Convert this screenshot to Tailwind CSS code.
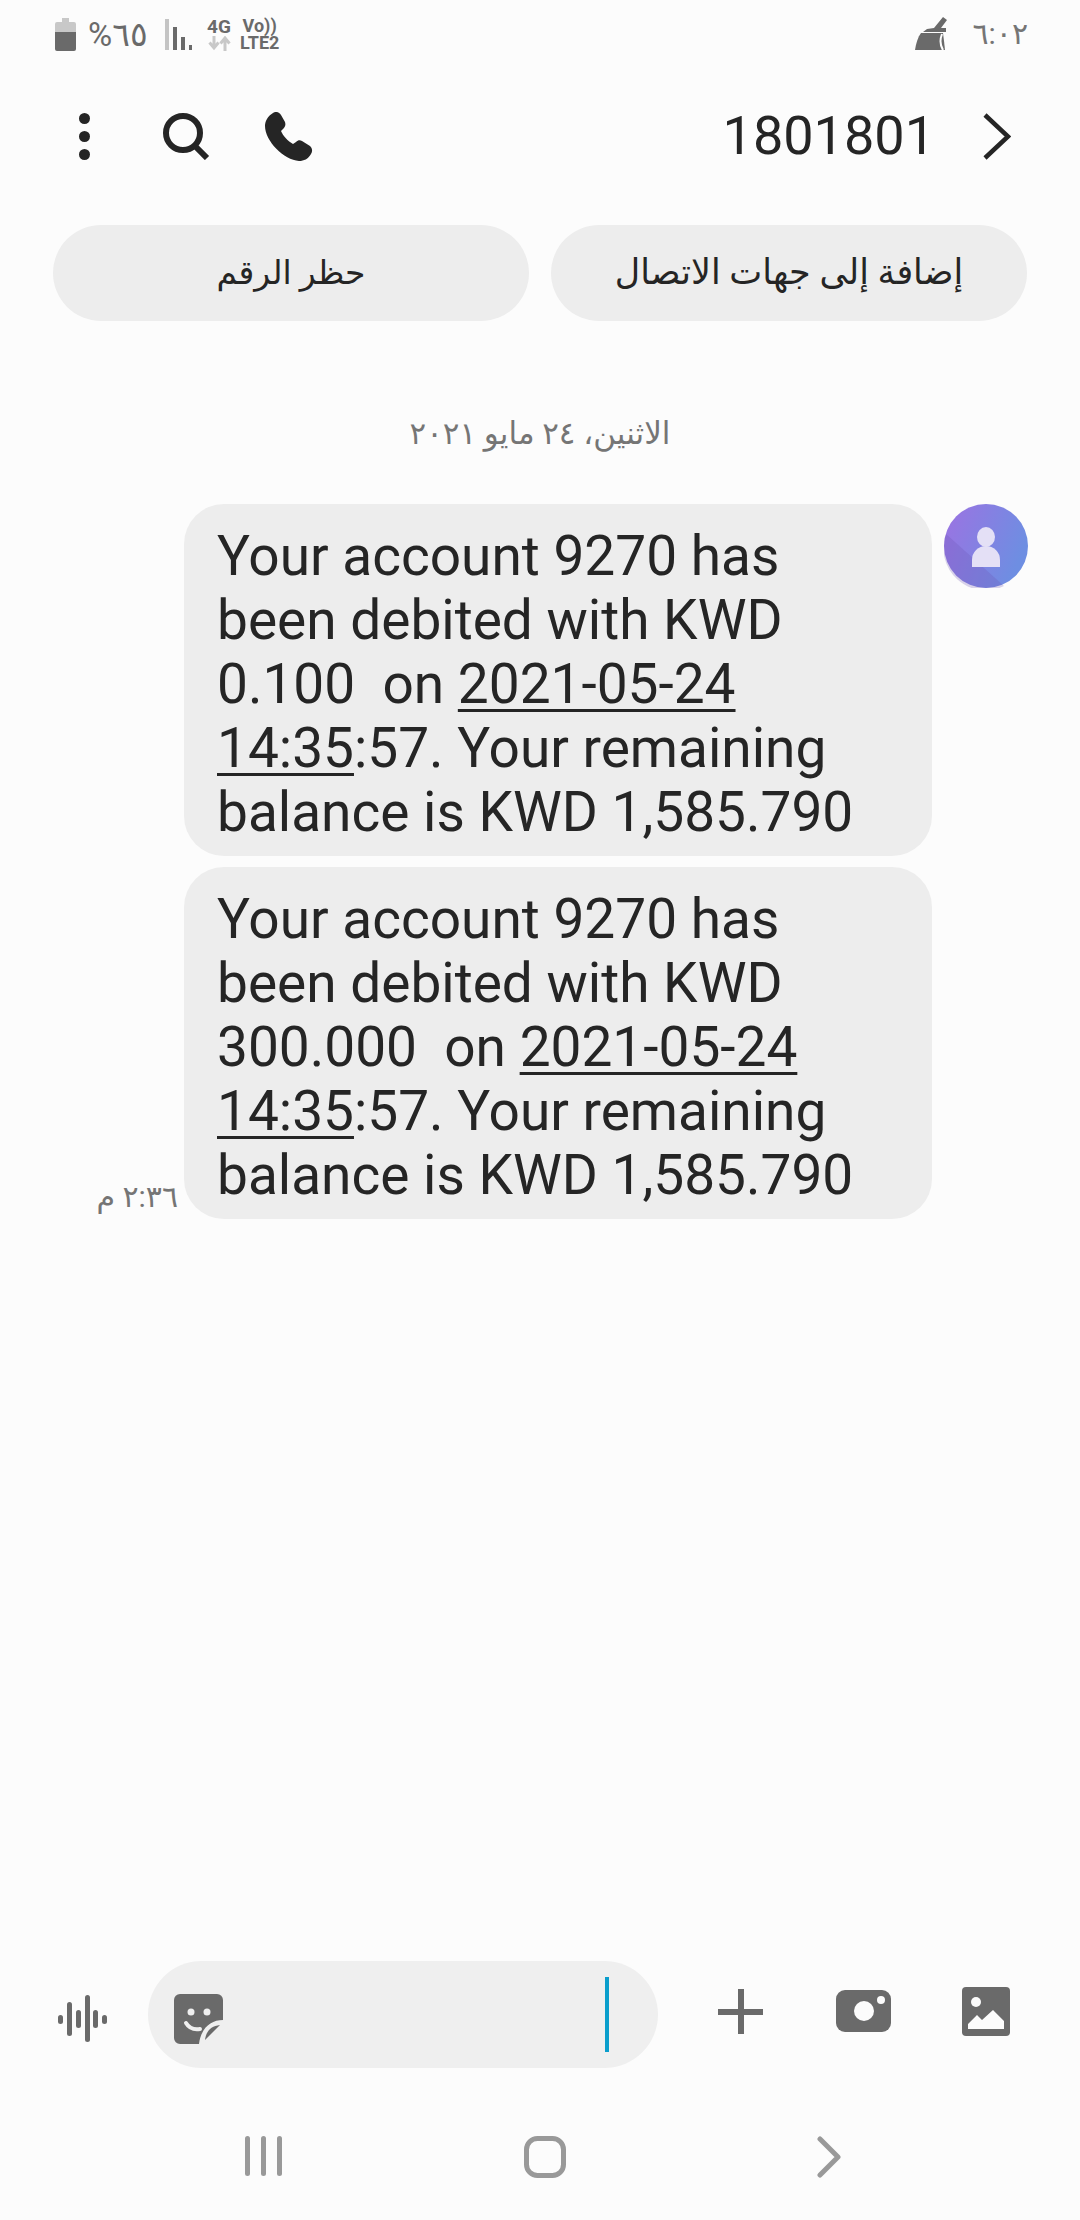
<!DOCTYPE html>
<html lang="ar">
<head>
  <meta charset="UTF-8">
  <meta name="viewport" content="width=device-width, initial-scale=1.0">
  <title>1801801</title>
  <script src="https://cdn.jsdelivr.net/npm/@tailwindcss/browser@4"></script>
</head>
<body class="bg-[#fcfcfc]">
  <div class="w-[1080px] h-[2220px] flex flex-col font-['Roboto','DejaVu_Sans',sans-serif] text-[#252525] overflow-hidden">

    <!-- status bar -->
    <div class="h-[68px] flex items-start justify-between pl-[55px] pr-[52px] pt-[17px] text-[#6a6a6a]">
      <div class="flex items-center">
        <svg width="21" height="33" viewBox="0 0 21 33"><path d="M7 0h7v4h5a2 2 0 0 1 2 2v8H0V6a2 2 0 0 1 2-2h5z" fill="#c8c8c8"/><path d="M0 14h21v17a2 2 0 0 1-2 2H2a2 2 0 0 1-2-2z" fill="#6a6a6a"/></svg>
        <span class="ml-[12px] text-[33px] leading-[33px] w-[60px] whitespace-nowrap">%٦٥</span>
        <svg class="ml-[17px]" width="28" height="31" viewBox="0 0 28 31"><rect x="0" y="0" width="4" height="31" fill="#c4c4c4"/><rect x="8" y="8" width="4" height="23" fill="#6a6a6a"/><rect x="16" y="18" width="4" height="13" fill="#6a6a6a"/><rect x="24" y="26" width="3" height="5" fill="#6a6a6a"/></svg>
        <div class="ml-[14px] w-[24px] flex flex-col items-center">
          <span class="text-[19px] leading-[18px] font-bold">4G</span>
          <svg width="23" height="15" viewBox="0 0 23 15"><path d="M6 0v10M1.500 6.500 6 12l4.500-5.500" fill="none" stroke="#c8c8c8" stroke-width="3"/><path d="M17 15V4M12.500 7.500 17 2l4.500 5.500" fill="none" stroke="#c8c8c8" stroke-width="3"/></svg>
        </div>
        <div class="ml-[9px] flex flex-col items-center">
          <span class="text-[18px] leading-[17px] font-bold">Vo))</span>
          <span class="text-[18px] leading-[17px] font-bold">LTE2</span>
        </div>
      </div>
      <div class="flex items-center">
        <svg width="34" height="33" viewBox="0 0 34 33"><path d="M28 0l4 3-6 8h5v4H8l4-3 7-1z" fill="#6a6a6a"/><path d="M6 16h22l1 8 1 9H0c1-7 3-13 6-17z" fill="#6a6a6a"/><path d="M27 17c-2 5-2 11 1 16" fill="none" stroke="#fcfcfc" stroke-width="2"/></svg>
        <span class="ml-[23px] text-[30px] leading-[33px] text-[#757575]">٦:٠٢</span>
      </div>
    </div>

    <!-- header -->
    <div class="h-[66px] mt-[35px] flex items-center pl-[79px] pr-[69px]">
      <svg width="11" height="47" viewBox="0 0 11 47" fill="#252525"><circle cx="5.500" cy="5.500" r="5.500"/><circle cx="5.500" cy="23.500" r="5.500"/><circle cx="5.500" cy="41.500" r="5.500"/></svg>
      <svg class="ml-[73px]" width="47" height="47" viewBox="0 0 47 47" fill="none" stroke="#252525" stroke-width="6"><circle cx="20" cy="20" r="17"/><path d="M31 32l13 13"/></svg>
      <svg class="ml-[54px]" width="49" height="49" viewBox="0 0 49 49"><path d="M9 1c3-2 6-1 8 2l4 7c1 3 0 5-2 7l-2 2c2 5 7 10 12 13l3-2c2-2 4-2 6-1l8 5c2 2 3 5 1 8-3 5-7 7-12 7C20 48 1 29 1 14 1 9 4 4 9 1z" fill="#252525"/></svg>
      <span class="ml-auto text-[54px] leading-[66px]">1801801</span>
      <svg class="ml-[48px]" width="28" height="47" viewBox="0 0 28 47" fill="none" stroke="#252525" stroke-width="4.500"><path d="M2 2l23 21.500L2 45"/></svg>
    </div>

    <!-- action pills -->
    <div class="mt-[56px] px-[53px] flex gap-[22px]">
      <button class="flex-1 h-[96px] rounded-full bg-[#ededed] text-[33px]">حظر الرقم</button>
      <button class="flex-1 h-[96px] rounded-full bg-[#ededed] text-[35px]">إضافة إلى جهات الاتصال</button>
    </div>

    <!-- conversation -->
    <div class="mt-[90px] text-center text-[31px] leading-[46px] text-[#757575]">الاثنين، ٢٤ مايو ٢٠٢١</div>

    <div class="mt-[47px] pl-[184px] pr-[52px] flex items-start">
      <div class="relative w-[748px] flex flex-col gap-[11px]">
        <div class="rounded-[40px] bg-[#ededed] px-[33px] pt-[20px] pb-[12px] text-[55px] leading-[64px] whitespace-pre-wrap">Your account 9270 has been debited with KWD 0.100  on <span class="underline decoration-[3px] underline-offset-[6px]">2021-05-24</span> <span class="underline decoration-[3px] underline-offset-[6px]">14:35</span>:57. Your remaining balance is KWD 1,585.790</div>
        <div class="rounded-[40px] bg-[#ededed] px-[33px] pt-[20px] pb-[12px] text-[55px] leading-[64px] whitespace-pre-wrap">Your account 9270 has been debited with KWD 300.000  on <span class="underline decoration-[3px] underline-offset-[6px]">2021-05-24</span> <span class="underline decoration-[3px] underline-offset-[6px]">14:35</span>:57. Your remaining balance is KWD 1,585.790</div>
        <span class="absolute right-[754px] bottom-[0px] text-[30px] leading-[44px] text-[#757575] whitespace-nowrap">٢:٣٦ م</span>
      </div>
      <svg class="ml-[12px]" width="84" height="84" viewBox="0 0 84 84">
        <defs><linearGradient id="avatarFill" x1="0" y1="0" x2="1" y2="0.400"><stop offset="0" stop-color="#9d72e2"/><stop offset="1" stop-color="#6e8ee2"/></linearGradient></defs>
        <circle cx="42" cy="42" r="42" fill="url(#avatarFill)"/>
        <path d="M2 30 60 82a42 42 0 0 1-58-52z" fill="#6b52b4" fill-opacity="0.250"/>
        <ellipse cx="42" cy="33" rx="9" ry="10" fill="#e4e0f6"/>
        <path d="M28 63V56a14 14 0 0 1 28 0v7z" fill="#e4e0f6"/>
      </svg>
    </div>

    <!-- composer -->
    <div class="mt-auto h-[107px] pl-[58px] flex items-center">
      <svg class="mt-[7px]" width="49" height="47" viewBox="0 0 49 47" fill="#6a6a6a"><rect x="0" y="20" width="5" height="9" rx="2.500"/><rect x="9" y="7" width="5" height="34" rx="2.500"/><rect x="18" y="15" width="5" height="18" rx="2.500"/><rect x="27" y="0" width="5" height="47" rx="2.500"/><rect x="35" y="15" width="5" height="18" rx="2.500"/><rect x="44" y="20" width="5" height="9" rx="2.500"/></svg>
      <div class="ml-[41px] w-[510px] h-[107px] rounded-full bg-[#efefef] flex items-center pl-[26px] pr-[49px]">
        <svg class="mt-[8px]" width="49" height="50" viewBox="0 0 49 50">
          <path d="M6 0h37a6 6 0 0 1 6 6v20c-12 0-22 8-24 24H6a6 6 0 0 1-6-6V6a6 6 0 0 1 6-6z" fill="#6a6a6a"/>
          <circle cx="17" cy="18" r="3.500" fill="#efefef"/><circle cx="33" cy="18" r="3.500" fill="#efefef"/>
          <path d="M12 29c3 5 8 7 14 6" fill="none" stroke="#efefef" stroke-width="4" stroke-linecap="round"/>
          <path d="M46 31c-9 1-14 6-15 15z" fill="#6a6a6a"/>
        </svg>
        <div class="ml-auto w-[4px] h-[75px] bg-[#0a9ecc]"></div>
      </div>
      <svg class="ml-[60px] -mt-[7px]" width="45" height="45" viewBox="0 0 45 45" fill="#6a6a6a"><rect x="20" y="0" width="6" height="45"/><rect x="0" y="20" width="45" height="6"/></svg>
      <svg class="ml-[73px] -mt-[7px]" width="55" height="42" viewBox="0 0 55 42"><rect width="55" height="42" rx="9" fill="#6a6a6a"/><circle cx="28" cy="21" r="10" fill="#fcfcfc"/><circle cx="45" cy="10" r="4" fill="#fcfcfc"/></svg>
      <svg class="ml-[71px] -mt-[7px]" width="48" height="49" viewBox="0 0 48 49"><rect width="48" height="49" rx="4" fill="#6a6a6a"/><circle cx="14" cy="15" r="5" fill="#fcfcfc"/><path d="M6 42v-5l9-9 5 5 11-10 11 11v8z" fill="#fcfcfc"/></svg>
    </div>

    <!-- navigation bar -->
    <div class="h-[152px] relative flex items-start pt-[68px] pl-[245px]">
      <svg width="37" height="40" viewBox="0 0 37 40" fill="#999999"><rect x="0" y="0" width="5" height="40" rx="2.500"/><rect x="16" y="0" width="5" height="40" rx="2.500"/><rect x="32" y="0" width="5" height="40" rx="2.500"/></svg>
      <svg class="ml-[242px]" width="42" height="42" viewBox="0 0 42 42" fill="none" stroke="#999999" stroke-width="5"><rect x="2.500" y="2.500" width="37" height="37" rx="11"/></svg>
      <svg class="ml-[251px]" width="24" height="42" viewBox="0 0 24 42" fill="none" stroke="#999999" stroke-width="5" stroke-linecap="round" stroke-linejoin="round"><path d="M3 3l18 18L3 39"/></svg>
    </div>
  </div>
</body>
</html>
